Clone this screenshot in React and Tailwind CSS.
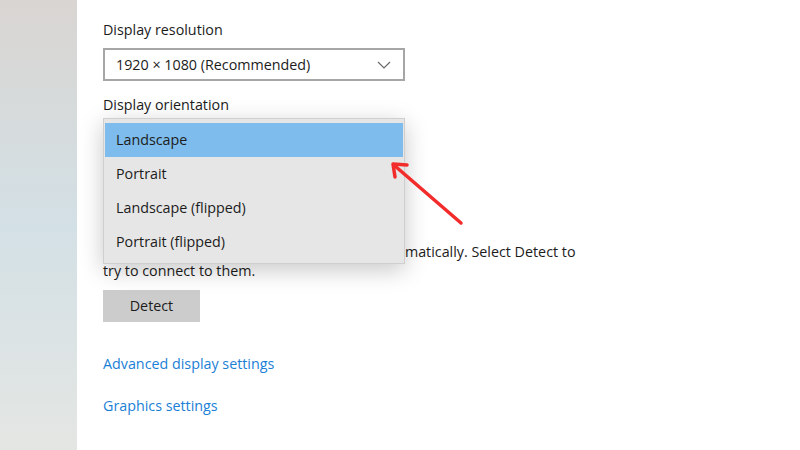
import React from 'react';

const ORIENTATIONS = ['Landscape', 'Portrait', 'Landscape (flipped)', 'Portrait (flipped)'];

export default function App() {
  return (
    <div className="flex h-[450px] w-[800px] overflow-hidden bg-white font-['Open_Sans',sans-serif] text-[14.3px] text-[#1c1c1c]">
      {/* blurred sidebar */}
      <div className="w-[77px] shrink-0 bg-gradient-to-b from-[#d9d5d2] via-[#d3e0e5] to-[#e4e6e3]" />

      <div className="relative flex-1 pl-[26px] pt-[20px]">
        <div className="leading-[20px]">Display resolution</div>
        <div className="mt-[8px] flex h-[33px] w-[302px] items-center justify-between border-2 border-[#a6a6a6] pl-[11px] pr-[12px]">
          <span>1920 × 1080 (Recommended)</span>
          <svg width="14" height="8" viewBox="0 0 14 8" fill="none">
            <path d="M1 1l6 6 6-6" stroke="#6b6b6b" strokeWidth="1.2" />
          </svg>
        </div>

        <div className="mt-[14px] leading-[20px]">Display orientation</div>
        <div className="mt-[3px] h-[33px] w-[302px] border-2 border-[#a6a6a6]" />

        <div className="mt-[91px] w-[482px] leading-[19px]">
          Older displays might not always connect automatically. Select Detect to try to connect to them.
        </div>
        <button className="mt-[10px] flex h-[32px] w-[97px] items-center justify-center bg-[#cccccc] text-[#1c1c1c]">
          Detect
        </button>

        <div className="mt-[32px] leading-[20px] text-[#1b7fd6]">Advanced display settings</div>
        <div className="mt-[22px] leading-[20px] text-[#1b7fd6]">Graphics settings</div>

        {/* open dropdown */}
        <div className="absolute left-[26px] top-[118px] w-[302px] border border-[#cfcfcf] bg-[#e6e6e6] px-[1px] pb-[4px] pt-[4px] shadow-[0_6px_22px_rgba(0,0,0,0.22)]">
          {ORIENTATIONS.map((o, i) => (
            <div
              key={o}
              className={`flex h-[34px] items-center pl-[11px] ${i === 0 ? 'bg-[#7dbcec]' : ''}`}
            >
              {o}
            </div>
          ))}
        </div>

        {/* annotation arrow */}
        <svg className="absolute left-0 top-0" width="723" height="450" viewBox="77 0 723 450" fill="none">
          <path d="M461 223L395 166" stroke="#f22b2b" strokeWidth="3.5" strokeLinecap="round" />
          <path d="M407 165L393 164L395 177" stroke="#f22b2b" strokeWidth="3.5" strokeLinecap="round" strokeLinejoin="round" />
        </svg>
      </div>
    </div>
  );
}
